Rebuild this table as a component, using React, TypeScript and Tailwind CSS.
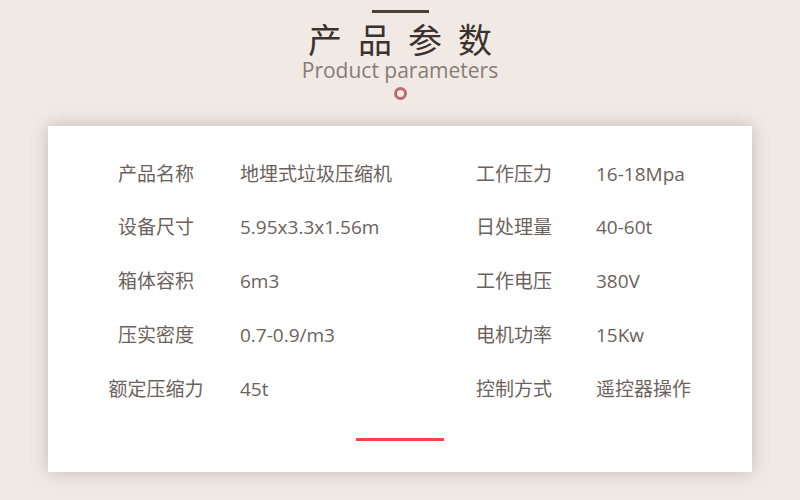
import React from 'react';

const rows: [string, string, string, string][] = [
  ['产品名称', '地埋式垃圾压缩机', '工作压力', '16-18Mpa'],
  ['设备尺寸', '5.95x3.3x1.56m', '日处理量', '40-60t'],
  ['箱体容积', '6m3', '工作电压', '380V'],
  ['压实密度', '0.7-0.9/m3', '电机功率', '15Kw'],
  ['额定压缩力', '45t', '控制方式', '遥控器操作'],
];

const font = { fontFamily: '"Open Sans", "Noto Sans CJK SC", sans-serif' };

export default function App() {
  return (
    <div className="w-[800px] h-[500px] bg-[#f1eae4] flex flex-col items-center overflow-hidden" style={font}>
      {/* 标题 */}
      <div className="mt-[10px] h-[3px] w-[57px] bg-[#4b3f38]" />
      <h1 className="mt-[10px] h-[34px] leading-[34px] text-[34px] font-normal text-[#3a322e] tracking-[16px] pl-[16px]">
        产品参数
      </h1>
      <p className="mt-[1px] h-[24px] leading-[24px] text-[21px] text-[#877c77]">Product parameters</p>
      <div className="mt-[5px] w-[13px] h-[13px] rounded-full border-[3px] border-[#bb6870]" />

      {/* 参数卡片 */}
      <div className="mt-[26px] w-[704px] h-[346px] bg-white shadow-[0_0_16px_rgba(110,90,80,0.35)] pt-[21px] flex flex-col">
        <div className="pl-[60px] grid grid-cols-[96px_262px_96px_1fr] text-[19px] text-[#6b625d]">
          {rows.map((r) => (
            <React.Fragment key={r[0]}>
              <div className="h-[53.75px] flex items-center justify-center whitespace-nowrap">{r[0]}</div>
              <div className="h-[53.75px] flex items-center pl-[36px] whitespace-nowrap">{r[1]}</div>
              <div className="h-[53.75px] flex items-center justify-center whitespace-nowrap">{r[2]}</div>
              <div className="h-[53.75px] flex items-center pl-[34px] whitespace-nowrap">{r[3]}</div>
            </React.Fragment>
          ))}
        </div>
        <div className="mt-[22px] self-center w-[88px] h-[3px] bg-[#ff4049]" />
      </div>
    </div>
  );
}
